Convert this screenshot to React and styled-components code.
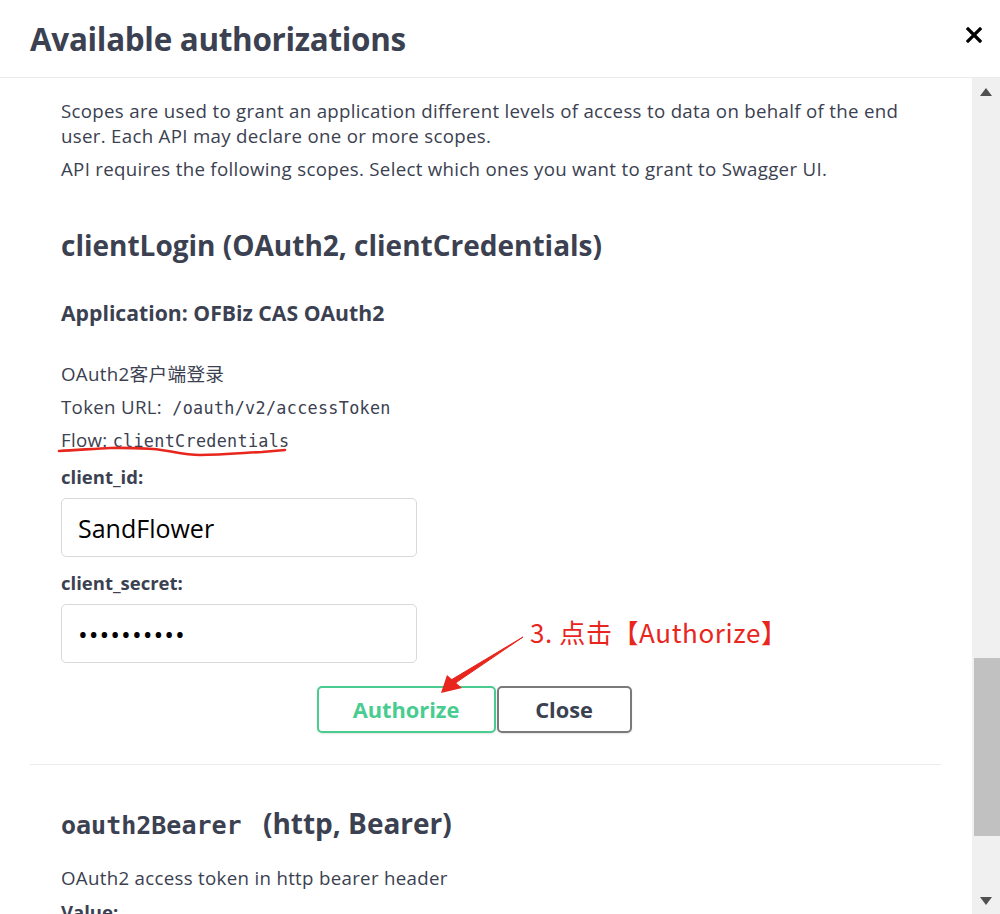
import React from "react";
import styled, { createGlobalStyle } from "styled-components";

const GlobalStyle = createGlobalStyle`
  html, body {
    margin: 0;
    padding: 0;
    background: #fff;
  }
  body {
    font-family: "Open Sans", "Noto Sans CJK SC", sans-serif;
    color: #3b4151;
  }
`;

const Modal = styled.div`
  position: relative;
  width: 1000px;
  height: 914px;
  display: flex;
  flex-direction: column;
  background: #fff;
  overflow: hidden;
`;

const Header = styled.div`
  height: 77px;
  flex-shrink: 0;
  display: flex;
  align-items: center;
  justify-content: space-between;
  padding: 0 18px 0 30px;
  border-bottom: 1px solid #ebebeb;
`;

const Title = styled.h3`
  margin: 0;
  font-size: 31.4px;
  font-weight: 700;
  color: #3b4151;
  letter-spacing: -0.3px;
`;

const CloseX = styled.button`
  border: none;
  background: none;
  padding: 0;
  width: 16px;
  height: 16px;
  margin-bottom: 8px;
  display: flex;
  cursor: pointer;
`;

const Body = styled.div`
  flex: 1;
  display: flex;
  min-height: 0;
`;

const Scroller = styled.div`
  flex: 1;
  padding: 0 30px;
  overflow: hidden;
`;

const Scrollbar = styled.div`
  width: 28px;
  flex-shrink: 0;
  background: #f0f0f0;
  display: flex;
  flex-direction: column;
  align-items: flex-end;
`;

const ScrollArrow = styled.div`
  width: 28px;
  height: 27px;
  display: flex;
  align-items: center;
  justify-content: center;
  font-size: 0;
`;

const Thumb = styled.div`
  width: 26px;
  height: 178px;
  background: #c1c1c1;
  margin-top: auto;
  margin-bottom: 51px;
`;

const Section = styled.div`
  padding: 0 31px;
`;

const Para = styled.p`
  margin: ${(p) => p.$m || "0"};
  font-size: 18.7px;
  letter-spacing: 0.3px;
  line-height: 25px;
`;

const AuthTitle = styled.h4`
  margin: ${(p) => p.$m || "0"};
  font-size: 28px;
  font-weight: 700;
  line-height: 36px;
`;

const Mono = styled.code`
  font-family: "DejaVu Sans Mono", "Liberation Mono", monospace;
  font-size: ${(p) => p.$size || "16.8px"};
  font-weight: ${(p) => (p.$bold ? 700 : 400)};
  margin-right: ${(p) => p.$gap || "0"};
  color: #3b4151;
`;

const AppName = styled.h6`
  margin: 35px 0 0;
  font-size: 21.2px;
  font-weight: 700;
  line-height: 30px;
`;

const Info = styled.div`
  margin-top: 29px;
  display: flex;
  flex-direction: column;
`;

const InfoLine = styled.p`
  margin: 0;
  height: 33px;
  font-size: 18.7px;
  letter-spacing: 0.3px;
  line-height: 33px;
`;

const FlowWrap = styled.span`
  position: relative;
  display: inline-block;
  line-height: 33px;
  vertical-align: top;
`;

const Underline = styled.svg`
  position: absolute;
  left: -3px;
  top: 24px;
  overflow: visible;
`;

const FieldLabel = styled.label`
  display: block;
  margin-top: ${(p) => p.$top || "6px"};
  font-size: 18.5px;
  font-weight: 700;
  line-height: 28px;
`;

const Input = styled.input`
  display: block;
  box-sizing: border-box;
  width: 356px;
  height: 59px;
  margin-top: 7px;
  padding: 0 16px;
  border: 1px solid #d9d9d9;
  border-radius: 5px;
  background: #fff;
  font-family: "Open Sans", sans-serif;
  font-size: ${(p) => (p.type === "password" ? "26px" : "25px")};
  color: #000;
  letter-spacing: ${(p) => (p.type === "password" ? "1px" : "0")};
  outline: none;
`;

const BtnRow = styled.div`
  display: flex;
  justify-content: center;
  margin: 23px 0 0;
  padding-right: 24px;
`;

const Btn = styled.button`
  box-sizing: border-box;
  height: 47px;
  width: ${(p) => p.$w};
  border: 2px solid ${(p) => (p.$primary ? "#49cc90" : "#7a7a7a")};
  border-radius: 5px;
  background: #fff;
  color: ${(p) => (p.$primary ? "#49cc90" : "#3b4151")};
  font-family: "Open Sans", sans-serif;
  font-size: 21.8px;
  font-weight: 700;
  box-shadow: 0 1px 2px rgba(0, 0, 0, 0.1);
  margin-left: ${(p) => p.$ml || "0"};
  cursor: pointer;
`;

const Divider = styled.hr`
  border: none;
  border-top: 1px solid #ebebeb;
  margin: 31px 0 0;
  width: 911px;
`;

const Note = styled.div`
  position: absolute;
  left: 530px;
  top: 614px;
  color: #e8261d;
  font-family: "Noto Sans CJK SC", sans-serif;
  font-size: 26px;
  letter-spacing: 0.6px;
  line-height: 36px;
  white-space: nowrap;
`;

const Overlay = styled.svg`
  position: absolute;
  left: 0;
  top: 0;
  pointer-events: none;
`;

export default function App() {
  return (
    <>
      <GlobalStyle />
      <Modal>
        <Header>
          <Title>Available authorizations</Title>
          <CloseX aria-label="close">
            <svg width="16" height="16" viewBox="0 0 16 16">
              <path d="M2 2 L14 14 M14 2 L2 14" stroke="#000" strokeWidth="3.2" strokeLinecap="square" />
            </svg>
          </CloseX>
        </Header>
        <Body>
          <Scroller>
            <Section>
              <Para $m="20px 0 0">
                Scopes are used to grant an application different levels of access to data on behalf of the end
                user. Each API may declare one or more scopes.
              </Para>
              <Para $m="8px 0 0">API requires the following scopes. Select which ones you want to grant to Swagger UI.</Para>
              <AuthTitle $m="46px 0 0">clientLogin (OAuth2, clientCredentials)</AuthTitle>
              <AppName>Application: OFBiz CAS OAuth2</AppName>
              <Info>
                <InfoLine>OAuth2客户端登录</InfoLine>
                <InfoLine>
                  Token URL:&nbsp; <Mono>/oauth/v2/accessToken</Mono>
                </InfoLine>
                <InfoLine>
                  <FlowWrap>
                    Flow: <Mono>clientCredentials</Mono>
                    <Underline width="230" height="10">
                      <path
                        d="M1 4 C 20 3, 40 1.5, 52 1 C 70 0.5, 85 1.5, 95 2 C 110 3, 125 8, 142 8 C 165 8, 190 5.5, 204 5 L 227 3"
                        fill="none"
                        stroke="#e8261d"
                        strokeWidth="2.6"
                        strokeLinecap="round"
                      />
                    </Underline>
                  </FlowWrap>
                </InfoLine>
              </Info>
              <FieldLabel $top="7px">client_id:</FieldLabel>
              <Input type="text" defaultValue="SandFlower" />
              <FieldLabel $top="12px">client_secret:</FieldLabel>
              <Input type="password" defaultValue="0123456789" />
              <BtnRow>
                <Btn $primary $w="179px">Authorize</Btn>
                <Btn $w="135px" $ml="1px">Close</Btn>
              </BtnRow>
            </Section>
            <Divider />
            <Section>
              <AuthTitle $m="40px 0 0">
                <Mono $size="25px" $bold $gap="14px">oauth2Bearer</Mono>&nbsp;(http, Bearer)
              </AuthTitle>
              <Para $m="21px 0 0">OAuth2 access token in http bearer header</Para>
              <FieldLabel $top="8px">Value:</FieldLabel>
            </Section>
          </Scroller>
          <Scrollbar>
            <ScrollArrow>
              <svg width="12" height="8" viewBox="0 0 12 8">
                <path d="M6 0 L12 8 L0 8 Z" fill="#505050" />
              </svg>
            </ScrollArrow>
            <Thumb />
            <ScrollArrow>
              <svg width="12" height="8" viewBox="0 0 12 8">
                <path d="M0 0 L12 0 L6 8 Z" fill="#505050" />
              </svg>
            </ScrollArrow>
          </Scrollbar>
        </Body>
        <Note>3. 点击【Authorize】</Note>
        <Overlay width="1000" height="914">
          <path d="M523 637 L454 684 L451 680 Z" fill="#e8261d" stroke="#e8261d" strokeWidth="1" strokeLinejoin="round" />
          <path d="M441 693 L447 675 L462 688 Z" fill="#e8261d" />
        </Overlay>
      </Modal>
    </>
  );
}
